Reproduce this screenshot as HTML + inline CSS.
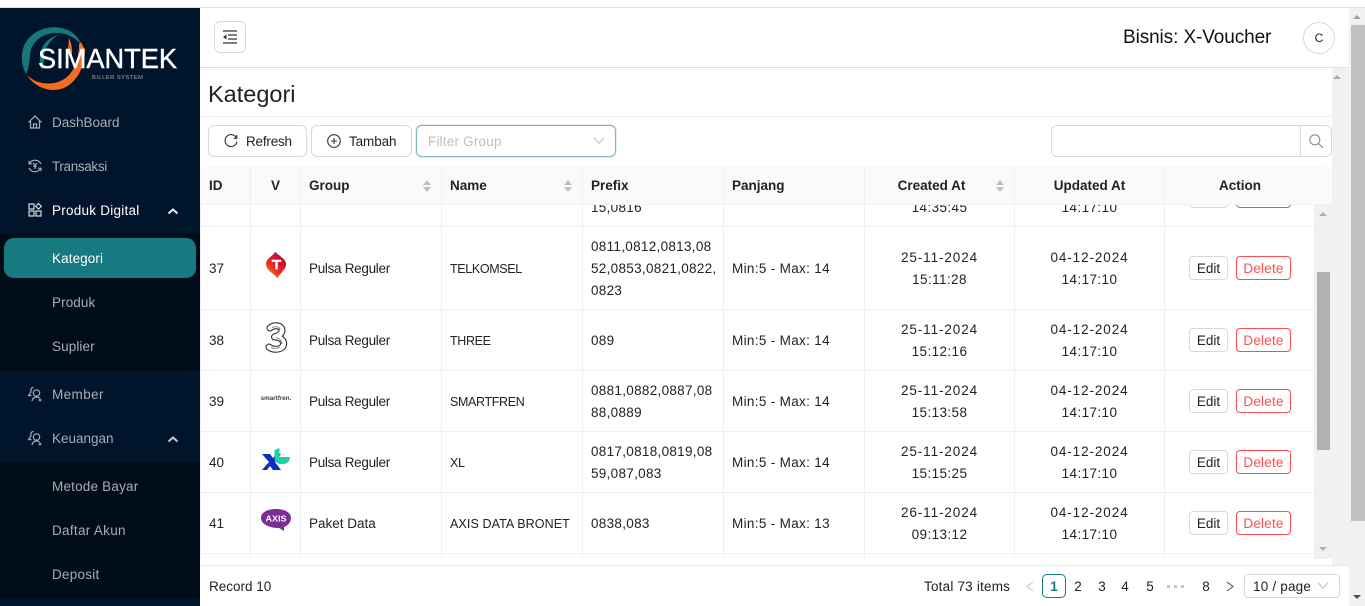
<!DOCTYPE html>
<html><head><meta charset="utf-8"><title>Kategori</title>
<style>
*{box-sizing:border-box}
html,body{margin:0;padding:0;width:1365px;height:606px;overflow:hidden;background:#fff;font-family:"Liberation Sans",sans-serif;font-size:13.5px;color:#222}
.a{position:absolute}
.topline{left:0;top:7px;width:1365px;height:1px;background:#e2e2e2}
#side{left:0;top:8px;width:200px;height:598px;background:#00152b}
.sub{left:0;width:200px;background:#000c17}
.mi{position:absolute;left:52px;font-size:13.5px;line-height:20px;color:#a6adb4;letter-spacing:.1px;white-space:nowrap}
.mi.w{color:#fff}
.ic{position:absolute;left:27px;width:16px;height:16px;fill:none;stroke:#a6adb4;stroke-width:1.2}
table{border-collapse:separate;border-spacing:0;table-layout:fixed;width:1115px;position:absolute;left:0;top:-39px}
td{border-right:1px solid #f0f0f0;border-bottom:1px solid #f0f0f0;padding:2px 8px 0;line-height:22px;height:61px;vertical-align:middle;overflow:hidden;white-space:nowrap}
td:first-child{border-left:1px solid #f0f0f0}
td.c{text-align:center}
td.g{letter-spacing:-.3px}
td.n{font-size:12.5px;letter-spacing:-.35px}
td.p{letter-spacing:.3px}
td.m{letter-spacing:.33px}
.dt{letter-spacing:.9px}
.tm{letter-spacing:.4px}
.btn{display:inline-block;position:relative;top:-1px;left:.5px;height:24px;width:39px;text-align:center;line-height:23px;border:1px solid #d9d9d9;border-radius:4px;background:#fff;font-size:13.5px;vertical-align:middle}
.btn.d{border-color:#ff4d4f;color:#ff4d4f;margin-left:8px;width:55px;letter-spacing:.2px}
.th{position:absolute;top:166px;height:39px;background:#fafafa;border-right:1px solid #f0f0f0;border-bottom:1px solid #f0f0f0;font-weight:bold;line-height:39px;padding-left:8px;color:#222}
.th.c{text-align:center;padding:0}
.sort{position:absolute;top:13px;width:10px;height:14px}
.bb{position:absolute;border:1px solid #d9d9d9;border-radius:6px;background:#fff;height:32px;top:125px;line-height:31px}
.pg{position:absolute;top:575px;height:22px;line-height:23px;text-align:center;width:22px;font-size:13.5px}
</style></head><body>
<div class="a topline"></div>

<div id="side" class="a">
<svg class="a" style="left:0;top:-8px" width="200" height="100" viewBox="0 0 200 100">
<path d="M26 74C20 62 20 48 29 38C39 27 56 24 70 31C75 34 79 38 81 44C74 37 66 33 57 33C42 33 31 42 30 55C29.500 62 29 68 26 74Z" fill="#17777d"/>
<path d="M42 70C38 60 40 48 46 42C50 38 54 36 58 35C50 40 45 48 44 56C44 62 44 66 42 70Z" fill="#17777d"/>
<path d="M27 75C36 84 48 85 58 82C70 78 79 66 79 44L81 42L85 50C85 66 78 80 66 87C52 94 35 88 27 75Z" fill="#f26d21"/>
<path d="M69 38C72 44 73 52 71 58L68 50Z" fill="#f26d21"/>
<text x="38" y="68" font-family="Liberation Sans" font-size="27.5" fill="#fff" stroke="#fff" stroke-width=".4" textLength="139" lengthAdjust="spacingAndGlyphs">SIMANTEK</text>
<text x="92" y="79" font-family="Liberation Sans" font-size="5.8" fill="#a8aeb6" textLength="51">BILLER SYSTEM</text>
</svg>
<div class="a sub" style="top:226px;height:137px"></div>
<div class="a sub" style="top:454px;height:136px"></div>
<div class="a" style="left:4px;top:230px;width:192px;height:40px;background:#177a80;border-radius:10px"></div>

<svg class="ic" style="top:106px" viewBox="0 0 16 16"><path d="M1.500 8.500L8 2l6.500 6.500M3.500 7v7h9V7M6.500 14v-4h3v4"/></svg>
<svg class="ic" style="top:150px" viewBox="0 0 16 16"><path d="M2.500 5.500A6.500 6.500 0 0 1 14 6M13.500 10.500A6.500 6.500 0 0 1 2 10M2 2.800v3h3M14 13.200v-3h-3"/><path d="M6 5l2 2.500L10 5M8 7.500V11M6.300 8.500h3.400"/></svg>
<svg class="ic" style="top:194px" viewBox="0 0 16 16"><path d="M2 2h5v5H2zM2 9h5v5H2zM9 9h5v5H9zM11.500 1.500l2.800 2.800-2.800 2.800-2.800-2.800z" stroke="#d6dadd"/></svg>
<svg class="ic" style="top:378px" viewBox="0 0 16 16"><circle cx="9.500" cy="7" r="3.200"/><path d="M6.500 1.500C4 1.500 3.500 4 4 6L1.500 9.500h3M5 15c.5-2.500 2-4 4.500-4 1.200 0 2.200.3 3 1M13 12.500v3M11.500 14h3"/></svg>
<svg class="ic" style="top:422px" viewBox="0 0 16 16"><circle cx="9.500" cy="7" r="3.200"/><path d="M6.500 1.500C4 1.500 3.500 4 4 6L1.500 9.500h3M5 15c.5-2.500 2-4 4.500-4 1.200 0 2.200.3 3 1M13 12.500v3M11.500 14h3"/></svg>

<div class="mi" style="top:105px;letter-spacing:0">DashBoard</div>
<div class="mi" style="top:149px;letter-spacing:-.35px">Transaksi</div>
<div class="mi w" style="top:193px;letter-spacing:.25px">Produk Digital</div>
<div class="mi w" style="top:241px">Kategori</div>
<div class="mi" style="top:285px">Produk</div>
<div class="mi" style="top:329px">Suplier</div>
<div class="mi" style="top:377px;letter-spacing:.4px">Member</div>
<div class="mi" style="top:421px;letter-spacing:0">Keuangan</div>
<div class="mi" style="top:469px;letter-spacing:.2px">Metode Bayar</div>
<div class="mi" style="top:513px;letter-spacing:.3px">Daftar Akun</div>
<div class="mi" style="top:557px;letter-spacing:.25px">Deposit</div>
<svg class="a" style="left:167px;top:199px" width="12" height="8" viewBox="0 0 12 8"><path d="M1.500 6.500L6 2.500l4.500 4" fill="none" stroke="#e8eaec" stroke-width="2"/></svg>
<svg class="a" style="left:167px;top:427px" width="12" height="8" viewBox="0 0 12 8"><path d="M1.500 6.500L6 2.500l4.500 4" fill="none" stroke="#c8ccd0" stroke-width="2"/></svg>
</div>

<!-- header -->
<div class="a" style="left:200px;top:67px;width:1149px;height:1px;background:#dfdfdf"></div>
<div class="a" style="left:214px;top:21px;width:32px;height:32px;border:1px solid #d9d9d9;border-radius:6px"></div>
<svg class="a" style="left:223px;top:30px" width="14" height="14" viewBox="0 0 14 14"><path d="M0 1h14M5 5h9M5 9h9M0 13h14" stroke="#333" stroke-width="1.200"/><path d="M0 7l3.500-2.500v5z" fill="#333"/></svg>
<div class="a" style="left:1123px;top:25px;font-size:19px;line-height:26px;color:#111;letter-spacing:-.1px;white-space:nowrap">Bisnis: X-Voucher</div>
<div class="a" style="left:1303px;top:22px;width:32px;height:32px;border:1px solid #d9d9d9;border-radius:50%;text-align:center;line-height:30px;font-size:12px">C</div>

<div class="a" style="left:208px;top:79px;font-size:23.5px;line-height:30px;color:#222;white-space:nowrap">Kategori</div>
<div class="a" style="left:200px;top:116px;width:1132px;height:1px;background:#f0f0f0"></div>

<!-- toolbar -->
<div class="bb" style="left:208px;width:99px;padding-left:37px;letter-spacing:-.2px">Refresh</div>
<svg class="a" style="left:224px;top:134px" width="14" height="14" viewBox="0 0 14 14"><path d="M12.500 4A6 6 0 1 0 13 7.500M12.800 1v3.300H9.500" fill="none" stroke="#333" stroke-width="1.100"/></svg>
<div class="bb" style="left:311px;width:101px;padding-left:37px;letter-spacing:-.1px">Tambah</div>
<svg class="a" style="left:327px;top:134px" width="14" height="14" viewBox="0 0 14 14"><circle cx="7" cy="7" r="6.300" fill="none" stroke="#333" stroke-width="1.100"/><path d="M4 7h6M7 4v6" stroke="#333" stroke-width="1.100"/></svg>
<div class="bb" style="left:416px;width:200px;border-color:#7eb3b7;box-shadow:0 0 0 1px rgba(23,122,128,.12);padding-left:11px;color:#bfbfbf;letter-spacing:.2px">Filter Group</div>
<svg class="a" style="left:593px;top:136px" width="12" height="9" viewBox="0 0 12 9"><path d="M1 1.500l5 6 5-6" fill="none" stroke="#bfbfbf" stroke-width="1"/></svg>
<div class="bb" style="left:1051px;width:250px;border-radius:6px 0 0 6px"></div>
<div class="bb" style="left:1300px;width:32px;border-radius:0 6px 6px 0"></div>
<svg class="a" style="left:1308px;top:133px" width="16" height="16" viewBox="0 0 16 16"><circle cx="6.800" cy="6.800" r="5" fill="none" stroke="#8c8c8c" stroke-width="1.100"/><path d="M10.500 10.500L15 15" stroke="#8c8c8c" stroke-width="1.200"/></svg>

<!-- table body -->
<div class="a" style="left:200px;top:205px;width:1115px;height:354px;overflow:hidden">
<table>
<colgroup><col style="width:51px"><col style="width:50px"><col style="width:141px"><col style="width:141px"><col style="width:141px"><col style="width:141px"><col style="width:150px"><col style="width:150px"><col style="width:150px"></colgroup>
<tr><td>36</td><td></td><td class="g">Pulsa Reguler</td><td class="n">INDOSAT</td><td class="p">0814,0815,08<br>15,0816</td><td class="m">Min:5 - Max: 14</td><td class="c"><span class="dt">25-11-2024</span><br><span class="tm">14:35:45</span></td><td class="c"><span class="dt">04-12-2024</span><br><span class="tm">14:17:10</span></td><td class="c"><span class="btn">Edit</span><span class="btn d">Delete</span></td></tr>
<tr><td style="height:83px">37</td><td></td><td class="g">Pulsa Reguler</td><td class="n">TELKOMSEL</td><td class="p">0811,0812,0813,08<br>52,0853,0821,0822,<br>0823</td><td class="m">Min:5 - Max: 14</td><td class="c"><span class="dt">25-11-2024</span><br><span class="tm">15:11:28</span></td><td class="c"><span class="dt">04-12-2024</span><br><span class="tm">14:17:10</span></td><td class="c"><span class="btn">Edit</span><span class="btn d">Delete</span></td></tr>
<tr><td>38</td><td></td><td class="g">Pulsa Reguler</td><td class="n">THREE</td><td class="p">089</td><td class="m">Min:5 - Max: 14</td><td class="c"><span class="dt">25-11-2024</span><br><span class="tm">15:12:16</span></td><td class="c"><span class="dt">04-12-2024</span><br><span class="tm">14:17:10</span></td><td class="c"><span class="btn">Edit</span><span class="btn d">Delete</span></td></tr>
<tr><td>39</td><td></td><td class="g">Pulsa Reguler</td><td class="n">SMARTFREN</td><td class="p">0881,0882,0887,08<br>88,0889</td><td class="m">Min:5 - Max: 14</td><td class="c"><span class="dt">25-11-2024</span><br><span class="tm">15:13:58</span></td><td class="c"><span class="dt">04-12-2024</span><br><span class="tm">14:17:10</span></td><td class="c"><span class="btn">Edit</span><span class="btn d">Delete</span></td></tr>
<tr><td>40</td><td></td><td class="g">Pulsa Reguler</td><td class="n">XL</td><td class="p">0817,0818,0819,08<br>59,087,083</td><td class="m">Min:5 - Max: 14</td><td class="c"><span class="dt">25-11-2024</span><br><span class="tm">15:15:25</span></td><td class="c"><span class="dt">04-12-2024</span><br><span class="tm">14:17:10</span></td><td class="c"><span class="btn">Edit</span><span class="btn d">Delete</span></td></tr>
<tr><td>41</td><td></td><td>Paket Data</td><td class="n" style="letter-spacing:.1px">AXIS DATA BRONET</td><td class="p">0838,083</td><td class="m">Min:5 - Max: 13</td><td class="c"><span class="dt">26-11-2024</span><br><span class="tm">09:13:12</span></td><td class="c"><span class="dt">04-12-2024</span><br><span class="tm">14:17:10</span></td><td class="c"><span class="btn">Edit</span><span class="btn d">Delete</span></td></tr>
<tr><td></td><td></td><td></td><td></td><td></td><td></td><td></td><td></td><td></td></tr>
</table>
</div>

<!-- logos -->
<svg class="a" style="left:265px;top:250px" width="23" height="30" viewBox="0 0 24 30"><defs><linearGradient id="tg" x1="0" y1="1" x2=".6" y2=".2"><stop offset="0" stop-color="#fbc02d"/><stop offset=".5" stop-color="#ee3124"/><stop offset="1" stop-color="#c8102e"/></linearGradient></defs><path d="M11 1C13 5 22 8 22 14C22 20 15 24 13 29C10 24 1 21 1 14C1 8 8 6 11 1Z" fill="url(#tg)"/><path d="M7 9.500h10v2.200h-3.700v8h-2.600v-8H7z" fill="#fff"/></svg>
<svg class="a" style="left:264px;top:322px" width="24" height="31" viewBox="0 0 24 31"><path id="tp" d="M6 6C10 2.500 18 3 18 8.500C18 12.500 13 14 10.500 15C16 15 20.500 18 19.500 23C18 28 9 28.500 5 25" fill="none" stroke="#333" stroke-width="7" stroke-linecap="round" stroke-linejoin="round"/><path d="M6 6C10 2.500 18 3 18 8.500C18 12.500 13 14 10.500 15C16 15 20.500 18 19.500 23C18 28 9 28.500 5 25" fill="none" stroke="#fff" stroke-width="4.800" stroke-linecap="round" stroke-linejoin="round"/><path d="M8 5.500C11 4 16 4.500 16 8M12 15.500C15 16 18 19 18 22M7 25.500C10 27 14 26.500 16 25" fill="none" stroke="#777" stroke-width=".8"/></svg>
<div class="a" style="left:258px;top:395px;width:36px;text-align:center;font-size:6.3px;line-height:8px;font-weight:bold;color:#444;white-space:nowrap">smartfren.</div>
<svg class="a" style="left:261px;top:447px" width="30" height="25" viewBox="0 0 30 25"><path d="M1 7h8l3 4 3-4h5l-6 8 6 8h-8l-3-4-3 4H1l7-8z" fill="#0b2fc0"/><path d="M13.500 3l5-2v9h10.500c0 4-3 7-7 7h-2.500c-3 0-6-3-6-6z" fill="#1fcfa6"/></svg>
<svg class="a" style="left:260px;top:508px" width="32" height="25" viewBox="0 0 32 25"><path d="M16 1C24 1 31 4 31 10C31 15 27 18 24 19L24 23L19 20C9 20 1 16 1 10C1 4 8 1 16 1Z" fill="#7c2d97"/><text x="16" y="13.500" text-anchor="middle" font-family="Liberation Sans" font-size="8" font-weight="bold" fill="#fff" textLength="21" lengthAdjust="spacingAndGlyphs">AXIS</text></svg>

<!-- table header -->
<div class="a" style="left:200px;top:166px;width:1132px;height:39px;background:#fafafa;border-radius:8px 8px 0 0"></div>
<div class="th" style="left:200px;width:51px;padding-left:9px;border-radius:8px 0 0 0">ID</div>
<div class="th c" style="left:251px;width:50px">V</div>
<div class="th" style="left:301px;width:141px">Group<svg class="sort" style="left:121px" viewBox="0 0 10 14"><path d="M5 1l4 5H1zM5 13l4-5H1z" fill="#bfbfbf"/></svg></div>
<div class="th" style="left:442px;width:141px">Name<svg class="sort" style="left:121px" viewBox="0 0 10 14"><path d="M5 1l4 5H1zM5 13l4-5H1z" fill="#bfbfbf"/></svg></div>
<div class="th" style="left:583px;width:141px">Prefix</div>
<div class="th" style="left:724px;width:141px">Panjang</div>
<div class="th c" style="left:865px;width:150px;padding-right:16px">Created At<svg class="sort" style="left:130px" viewBox="0 0 10 14"><path d="M5 1l4 5H1zM5 13l4-5H1z" fill="#bfbfbf"/></svg></div>
<div class="th c" style="left:1015px;width:150px">Updated At</div>
<div class="th c" style="left:1165px;width:167px;border-right:0;padding-right:17px;border-radius:0 8px 0 0">Action</div>

<!-- inner table scrollbar -->
<div class="a" style="left:1315px;top:205px;width:17px;height:354px;background:#f1f1f1"></div>
<div class="a" style="left:1317px;top:272px;width:13px;height:178px;background:#b1b1b1"></div>
<svg class="a" style="left:1319px;top:211px" width="8" height="6"><path d="M4 1l4 4H0z" fill="#b0b0b0"/></svg>
<svg class="a" style="left:1319px;top:546px" width="8" height="6"><path d="M4 5l4-4H0z" fill="#b0b0b0"/></svg>

<!-- page inner scrollbar -->
<div class="a" style="left:1332px;top:68px;width:17px;height:497px;background:#f1f1f1"></div>
<svg class="a" style="left:1333px;top:74px" width="8" height="6"><path d="M4 1l4 4H0z" fill="#a8a8a8"/></svg>
<!-- outer scrollbar -->
<div class="a" style="left:1349px;top:8px;width:16px;height:598px;background:#f1f1f1"></div>
<div class="a" style="left:1351px;top:25px;width:14px;height:496px;background:#c1c1c1"></div>
<svg class="a" style="left:1353px;top:14px" width="8" height="6"><path d="M4 1l4 4H0z" fill="#a3a3a3"/></svg>
<svg class="a" style="left:1353px;top:594px" width="8" height="6"><path d="M4 5l4-4H0z" fill="#505050"/></svg>

<!-- footer -->
<div class="a" style="left:200px;top:565px;width:1149px;height:41px;background:#fff;border-top:1px solid #e8e8e8"></div>
<div class="a" style="left:209px;top:576px;line-height:22px">Record 10</div>
<div class="a" style="left:924px;top:576px;line-height:22px;white-space:nowrap;letter-spacing:.2px">Total 73 items</div>
<svg class="a" style="left:1025px;top:581px" width="10" height="11"><path d="M8 1L2 5.500 8 10" fill="none" stroke="#c4c4c4" stroke-width="1"/></svg>
<div class="pg" style="left:1042px;top:574px;width:24px;height:24px;border:1px solid #177a80;border-radius:5px;color:#177a80;font-weight:bold">1</div>
<div class="pg" style="left:1067px">2</div>
<div class="pg" style="left:1091px">3</div>
<div class="pg" style="left:1114px">4</div>
<div class="pg" style="left:1139px">5</div>
<div class="a" style="left:1167px;top:585px;width:20px;height:3px;background:repeating-linear-gradient(90deg,#c4c4c4 0 3px,transparent 3px 7px)"></div>
<div class="pg" style="left:1195px">8</div>
<svg class="a" style="left:1225px;top:581px" width="10" height="11"><path d="M2 1l6 4.500L2 10" fill="none" stroke="#444" stroke-width="1"/></svg>
<div class="a" style="left:1244px;top:574px;width:96px;height:24px;border:1px solid #d9d9d9;border-radius:4px;line-height:23px;padding-left:8px;white-space:nowrap;letter-spacing:.2px">10 / page</div>
<svg class="a" style="left:1317px;top:581px" width="12" height="9" viewBox="0 0 12 9"><path d="M1 1.500l5 6 5-6" fill="none" stroke="#bfbfbf" stroke-width="1"/></svg>
</body></html>
